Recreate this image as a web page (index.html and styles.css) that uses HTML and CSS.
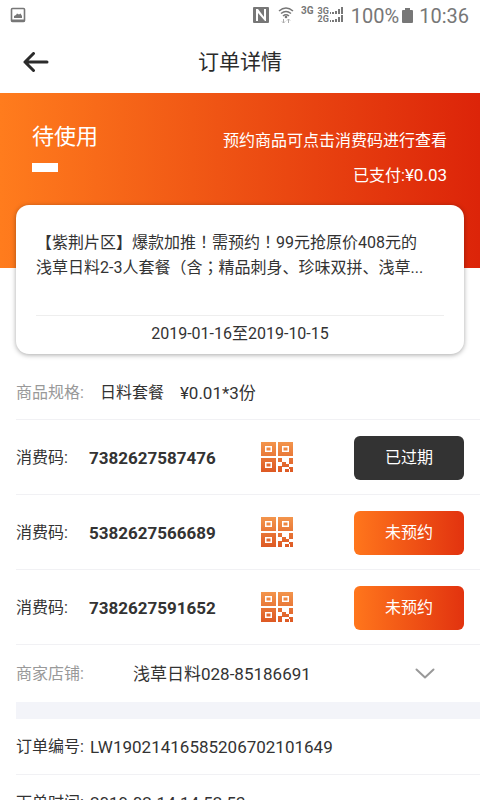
FILE: index.html
```html
<!DOCTYPE html>
<html lang="zh-CN">
<head>
<meta charset="utf-8">
<meta name="viewport" content="width=device-width, initial-scale=1">
<title>订单详情</title>
<link rel="stylesheet" href="styles.css">
</head>
<body>
<svg class="defs" aria-hidden="true">
  <defs>
    <linearGradient id="qr-fill" gradientUnits="userSpaceOnUse" x1="0" y1="0" x2="0" y2="32">
      <stop offset="0" stop-color="#f3954c"/>
      <stop offset="1" stop-color="#dc5521"/>
    </linearGradient>
    <symbol id="qr" viewBox="0 0 32 31">
      <g fill="url(#qr-fill)">
        <path fill-rule="evenodd" d="M0 0h15v14H0zM4 4v6h7V4zM5.500 5.500h4v3h-4z"/>
        <path fill-rule="evenodd" d="M17 0h15v14H17zM21 4v6h7V4zM22.500 5.500h4v3h-4z"/>
        <path fill-rule="evenodd" d="M0 16h15v14H0zM4 20v6h7v-6zM5.500 21.500h4v3h-4z"/>
        <path d="M17 16h4v4h-4zM28 16h4v6h-4zM21 20h4v5h-4zM17 24h4v6h-4zM25 22h3v3h-3zM24 27h4v3h-4zM28 25h4v5h-3v-3h-1z"/>
      </g>
    </symbol>
  </defs>
</svg>
<div class="app">
  <div class="status-bar">
    <svg width="16" height="16" viewBox="0 0 16 16" aria-hidden="true"><rect x="1.5" y="1.5" width="13" height="13" rx="1" fill="none" stroke="#777" stroke-width="1.6"/><path d="M1 13.500h14" stroke="#777" stroke-width="2"/><path d="M4 11V9l2-1 1-1.500 2 1 1.500-1L12 9v2z" fill="#777"/></svg>
    <div class="status-right">
      <svg width="16" height="16" viewBox="0 0 16 16" aria-hidden="true"><path fill="#777" fill-rule="evenodd" d="M1 0h14q1 0 1 1v14q0 1-1 1H1q-1 0-1-1V1q0-1 1-1zM3 2v12h2V6l7 8h1V2h-2v8L5 2z"/></svg>
      <svg class="wifi" width="16" height="17" viewBox="0 0 16 17" aria-hidden="true"><g fill="none" stroke="#777" stroke-width="1.500"><path d="M1 4q7-6 14 0"/><path d="M3 6.500q5-4 10 0"/><path d="M5 9q3-2.500 6 0"/></g><circle cx="8" cy="10" r="1.300" fill="#777"/><path d="M5.500 12v4M4 14.500l1.500 1.500L7 14.500M10.500 16v-4M9 13.500l1.500-1.500 1.500 1.500" fill="none" stroke="#aaa"/></svg>
      <span class="net">3G</span>
      <span class="net net-pair"><span>3G</span><span>2G</span></span>
      <svg class="bars" width="14" height="16" viewBox="0 0 14 16" aria-hidden="true"><path fill="#777" d="M0 5h1v2H0zM2 5h2v2H2zM5 4h2v3H5zM8 2h2v5H8zM11 0h2v7h-2zM0 13h1v2H0zM2 13h2v2H2zM5 12h2v3H5zM8 10h2v5H8zM11 8h2v7h-2z"/></svg>
      <span class="battery-text">100%</span>
      <svg width="11" height="15" viewBox="0 0 11 15" aria-hidden="true"><path fill="#777" d="M3 0h5v2h2q1 0 1 1v11q0 1-1 1H1q-1 0-1-1V3q0-1 1-1h2z"/></svg>
      <span class="clock">10:36</span>
    </div>
  </div>
  <header class="nav">
    <button class="back" type="button" aria-label="返回"><svg width="26" height="20" viewBox="0 0 26 20" aria-hidden="true"><path d="M10.500 1.500L2 10l8.500 8.500M2 10h22" fill="none" stroke="#2b2b2b" stroke-width="3" stroke-linecap="round" stroke-linejoin="round"/></svg></button>
    <h1>订单详情</h1>
  </header>
  <main>
    <section class="hero">
      <div class="state"><h2>待使用</h2><span class="mark"></span></div>
      <div class="notes"><p>预约商品可点击消费码进行查看</p><p>已支付:<span class="num">¥0.03</span></p></div>
    </section>
    <section class="card">
      <p class="goods">【紫荆片区】爆款加推<span class="punct" lang="zh-TW">！</span>需预约<span class="punct" lang="zh-TW">！</span>99元抢原价408元的浅草日料2-3人套餐（含<span class="punct" lang="zh-TW">；</span>精品刺身、珍味双拼、浅草...</p>
      <p class="period">2019-01-16至2019-10-15</p>
    </section>
    <div class="rows">
      <div class="row spec"><span class="label">商品规格:</span><span>日料套餐</span><span class="num">¥0.01*3份</span></div>
      <div class="row code"><span>消费码:</span><strong>7382627587476</strong><svg class="qr" role="img" aria-label="二维码"><use href="#qr"/></svg><button class="action expired" type="button">已过期</button></div>
      <div class="row code"><span>消费码:</span><strong>5382627566689</strong><svg class="qr" role="img" aria-label="二维码"><use href="#qr"/></svg><button class="action" type="button">未预约</button></div>
      <div class="row code"><span>消费码:</span><strong>7382627591652</strong><svg class="qr" role="img" aria-label="二维码"><use href="#qr"/></svg><button class="action" type="button">未预约</button></div>
      <div class="row shop"><span class="label">商家店铺:</span><span class="num">浅草日料028-85186691</span><button class="expand" type="button" aria-label="展开"><svg width="20" height="12" viewBox="0 0 20 12" aria-hidden="true"><path d="M1.500 1.500L10 9.500l8.500-8" fill="none" stroke="#999" stroke-width="2" stroke-linecap="round" stroke-linejoin="round"/></svg></button></div>
      <div class="band"></div>
      <div class="row order"><span>订单编号:</span><span class="num">LW19021416585206702101649</span></div>
      <div class="row order"><span>下单时间:</span><span class="num">2019-02-14 14:52:53</span></div>
    </div>
  </main>
</div>
</body>
</html>
```

FILE: styles.css
```css
* { box-sizing: border-box; }
body {
  margin: 0;
  background: #fff;
  color: #333;
  font: 16px/24px Roboto, "Noto Sans CJK SC", sans-serif;
}
h1, h2, p { margin: 0; font-weight: 400; }
button { border: 0; padding: 0; font: inherit; background: none; cursor: pointer; }
svg { display: block; flex: none; }
.defs { position: absolute; width: 0; height: 0; }
.num { font-size: 17px; }
.punct { font-family: "Noto Sans CJK TC", sans-serif; line-height: 16px; }

.app { display: flex; flex-direction: column; height: 100vh; overflow: hidden; }
.status-bar {
  display: flex;
  flex: none;
  align-items: center;
  justify-content: space-between;
  height: 30px;
  padding: 0 11px 0 10px;
  color: #777;
}
.status-right { display: flex; align-items: center; }
.wifi { margin-left: 9px; }
.net { margin-left: 7px; font-size: 10px; line-height: 14px; font-weight: 700; padding-bottom: 8px; }
.net-pair { display: flex; flex-direction: column; margin-left: 4px; padding: 0; line-height: 8px; font-size: 9px; }
.bars { margin-left: 1px; }
.battery-text { margin: 0 3px 0 7px; font-size: 20px; line-height: 28px; padding-top: 2px; }
.clock { margin-left: 6px; font-size: 20px; line-height: 28px; padding-top: 2px; }

.nav {
  display: grid;
  flex: none;
  grid-template-columns: 60px 1fr 60px;
  align-items: center;
  height: 63px;
}
.back { padding-left: 23px; height: 44px; }
.nav h1 { font-size: 21px; text-align: center; color: #2b2b2b; }

main { flex: 1; min-height: 0; overflow-y: auto; scrollbar-width: none; }
.hero {
  display: flex;
  justify-content: space-between;
  height: 175px;
  padding: 28px 33px 0 32px;
  background: linear-gradient(to right, #ff7c1d, #dc2409);
  color: #fff;
}
.state h2 { font-size: 22px; line-height: 32px; }
.mark { display: block; width: 26px; height: 9px; margin-top: 10px; background: #fff; }
.notes { display: flex; flex-direction: column; gap: 10px; padding-top: 8px; text-align: right; }
.card {
  position: relative;
  margin: -63px 16px 0;
  padding: 25px 20px 8px;
  border-radius: 13px;
  background: #fff;
  box-shadow: 0 1px 5px rgba(0, 0, 0, .35);
}
.goods { height: 80px; padding-right: 12px; line-height: 25px; overflow: hidden; }
.period { padding-top: 6px; margin-top: 5px; border-top: 1px solid #eee; text-align: center; line-height: 24px; }

.rows { padding-left: 16px; }
.row { display: flex; align-items: center; padding-top: 1px; border-bottom: 1px solid #f1f1f4; }
.label { color: #999; }
.spec { height: 55px; gap: 16px; margin-top: 11px; }
.code { height: 75px; padding-right: 16px; }
.code > span { width: 73px; }
.code strong { font-size: 17px; width: 172px; }
.qr { width: 32px; height: 31px; }
.action {
  width: 110px;
  height: 44px;
  margin-left: auto;
  border-radius: 6px;
  background: linear-gradient(to right, #ff761c, #e2330f);
  color: #fff;
}
.expired { background: #333; }
.shop { height: 57px; border: 0; padding-right: 45px; }
.shop .label { width: 117px; }
.expand { margin-left: auto; }
.band { height: 17px; background: #f3f4f9; }
.order { height: 56px; gap: 6px; }
```
